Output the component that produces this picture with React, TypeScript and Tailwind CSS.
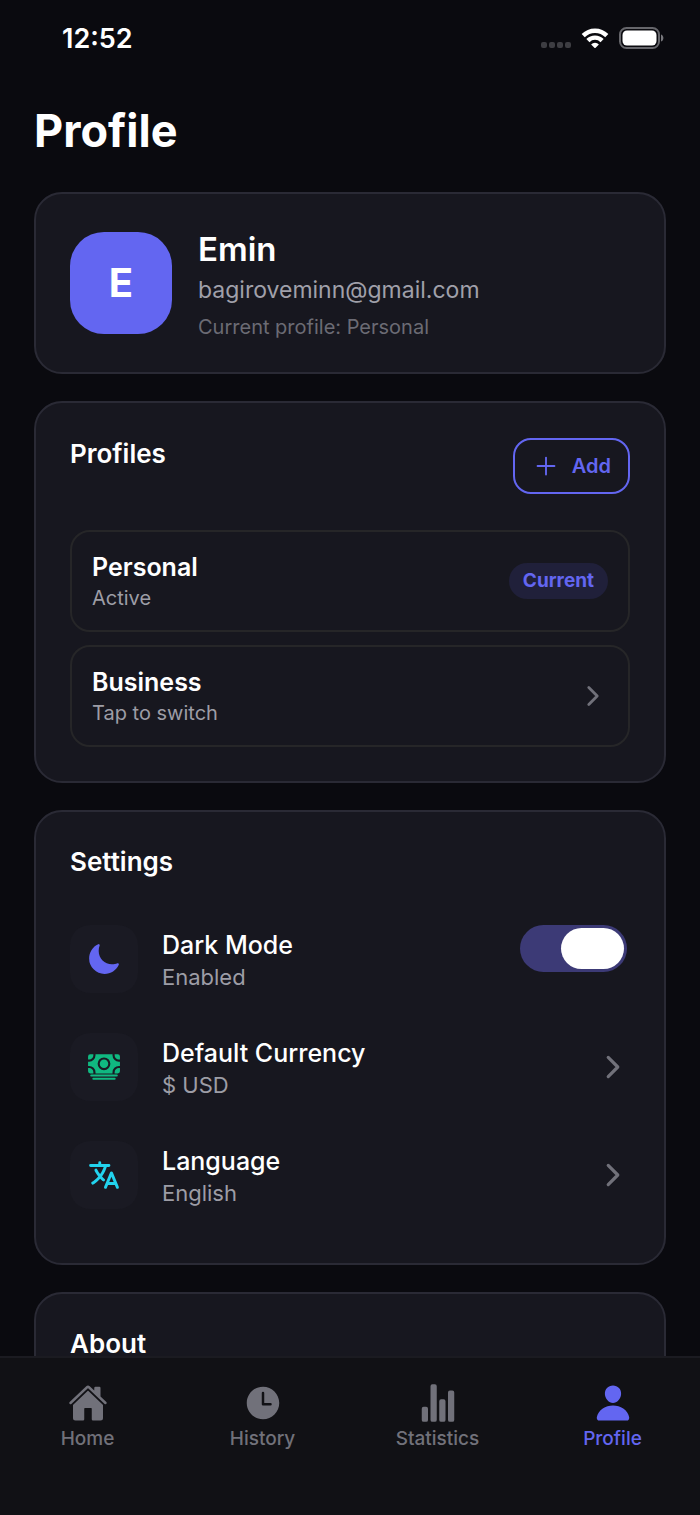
import { useState } from "react";
import type { ReactNode } from "react";
import type { IconType } from "react-icons";
import {
  IoAdd,
  IoCash,
  IoChevronForward,
  IoHome,
  IoLanguage,
  IoMoon,
  IoPerson,
  IoStatsChart,
  IoTime,
} from "react-icons/io5";

function StatusBar() {
  return (
    <div className="flex h-[76px] shrink-0 items-center justify-between pr-9 pl-[62px]">
      <span className="pt-px text-[27px] leading-8 font-semibold">12:52</span>
      <div className="flex items-center gap-[10px]">
        <div className="flex gap-[2px] pt-[14px]">
          {[0, 1, 2, 3].map((dot) => (
            <span key={dot} className="size-[6px] rounded-[2px] bg-[#3d3d42]" />
          ))}
        </div>
        <svg className="h-5 w-7" viewBox="0 0 28 20" fill="none" stroke="#fff" aria-hidden="true">
          <path d="M2.2 7.6A16.6 16.6 0 0 1 25.8 7.6" strokeWidth="4.4" />
          <path d="M6.9 12.6A10 10 0 0 1 21.1 12.6" strokeWidth="4.4" />
          <path d="M14 20.4l-3.9-4a5.6 5.6 0 0 1 7.8 0z" fill="#fff" stroke="none" />
        </svg>
        <svg className="h-[22px] w-[45px]" viewBox="0 0 45 22" aria-hidden="true">
          <rect x="1" y="1" width="39" height="20" rx="6.5" fill="none" stroke="#66666b" strokeWidth="2" />
          <rect x="3.5" y="3.5" width="34" height="15" rx="4.5" fill="#fff" />
          <path d="M42 7.5c3.2 1 3.2 6 0 7z" fill="#77777c" />
        </svg>
      </div>
    </div>
  );
}

function Card({ children, className = "" }: { children: ReactNode; className?: string }) {
  return (
    <section className={`shrink-0 rounded-[28px] border-2 border-[#2a2a35] bg-[#17171f] px-[34px] ${className}`}>
      {children}
    </section>
  );
}

function ProfileItem({ name, note, children }: { name: string; note: string; children: ReactNode }) {
  return (
    <button
      type="button"
      className="flex h-[102px] w-full items-center justify-between rounded-[20px] border-2 border-[#262628] px-5 text-left"
    >
      <span className="flex flex-col pt-[2px]">
        <span className="text-[25px] leading-8 font-semibold">{name}</span>
        <span className="text-[20px] leading-[30px] text-[#9d9da6]">{note}</span>
      </span>
      {children}
    </button>
  );
}

function SettingText({ title, note }: { title: string; note: string }) {
  return (
    <span className="flex flex-1 flex-col pt-1 text-left">
      <span className="text-[25px] leading-8 font-medium">{title}</span>
      <span className="text-[22px] leading-8 text-[#9d9da6]">{note}</span>
    </span>
  );
}

function IconTile({ icon: Icon, tone }: { icon: IconType; tone: string }) {
  return (
    <span className="flex size-[68px] items-center justify-center rounded-[20px] bg-[#1a1a23]">
      <Icon className={`size-[34px] ${tone}`} />
    </span>
  );
}

function Switch({ on, onChange }: { on: boolean; onChange: (on: boolean) => void }) {
  return (
    <label
      className={`mr-[3px] flex h-[47px] w-[107px] rounded-full p-[3px] ${on ? "justify-end bg-[#3c3a76]" : "justify-start bg-[#3a3a44]"}`}
    >
      <input
        type="checkbox"
        className="sr-only"
        aria-label="Dark Mode"
        checked={on}
        onChange={(event) => onChange(event.target.checked)}
      />
      <span className="w-[63px] rounded-full bg-white" />
    </label>
  );
}

const links: { label: string; icon: IconType; active?: boolean }[] = [
  { label: "Home", icon: IoHome },
  { label: "History", icon: IoTime },
  { label: "Statistics", icon: IoStatsChart },
  { label: "Profile", icon: IoPerson, active: true },
];

export default function App() {
  const [dark, setDark] = useState(true);

  return (
    <div className="flex h-screen flex-col bg-[#0a0a0f] font-['Inter',sans-serif] text-white">
      <StatusBar />
      <main className="flex min-h-0 flex-1 flex-col gap-[27px] overflow-hidden px-[34px]">
        <h1 className="mb-[7px] shrink-0 pt-7 text-[45px] leading-[54px] font-bold">Profile</h1>

        <Card className="flex items-start gap-[26px] pt-[38px] pb-8">
          <div className="flex size-[102px] shrink-0 items-center justify-center rounded-[34px] bg-[#6366f1] text-[40px] font-bold">
            E
          </div>
          <div className="flex flex-col">
            <h2 className="text-[33px] leading-[34px] font-semibold">Emin</h2>
            <p className="text-[23px] leading-[48px] text-[#a0a0aa]">bagiroveminn@gmail.com</p>
            <p className="text-[20px] leading-[26px] text-[#6b6b74]">Current profile: Personal</p>
          </div>
        </Card>

        <Card className="pt-[35px] pb-[34px]">
          <div className="mb-9 flex items-start justify-between">
            <h2 className="text-[26px] leading-8 font-semibold">Profiles</h2>
            <button
              type="button"
              className="flex h-14 items-center gap-[11px] rounded-[18px] border-2 border-[#6366f1] pr-[17px] pl-4 text-[20px] font-semibold text-[#6366f1]"
            >
              <IoAdd className="size-[30px]" />
              Add
            </button>
          </div>
          <div className="flex flex-col gap-[13px]">
            <ProfileItem name="Personal" note="Active">
              <span className="flex h-9 items-center rounded-full bg-[#20203a] px-[14px] text-[19px] font-bold text-[#6366f1]">
                Current
              </span>
            </ProfileItem>
            <ProfileItem name="Business" note="Tap to switch">
              <IoChevronForward className="size-[30px] text-[#71717a]" />
            </ProfileItem>
          </div>
        </Card>

        <Card className="pt-[34px] pb-[54px]">
          <h2 className="mb-[47px] text-[26px] leading-8 font-semibold">Settings</h2>
          <div className="flex flex-col gap-10">
            <div className="flex items-start gap-6">
              <IconTile icon={IoMoon} tone="text-[#6366f1]" />
              <SettingText title="Dark Mode" note="Enabled" />
              <Switch on={dark} onChange={setDark} />
            </div>
            <button type="button" className="flex items-start gap-6">
              <IconTile icon={IoCash} tone="text-[#10b981]" />
              <SettingText title="Default Currency" note="$ USD" />
              <IoChevronForward className="size-[34px] self-center text-[#71717a]" />
            </button>
            <button type="button" className="flex items-start gap-6">
              <IconTile icon={IoLanguage} tone="text-[#22d3ee]" />
              <SettingText title="Language" note="English" />
              <IoChevronForward className="size-[34px] self-center text-[#71717a]" />
            </button>
          </div>
        </Card>

        <Card className="h-40 pt-[34px]">
          <h2 className="text-[26px] leading-8 font-semibold">About</h2>
        </Card>
      </main>

      <nav className="grid h-[159px] shrink-0 grid-cols-4 items-start border-t-2 border-[#1b1b21] bg-[#111115] pt-[25px]">
        {links.map(({ label, icon: Icon, active }) => (
          <a
            key={label}
            href={`#${label.toLowerCase()}`}
            className={`flex flex-col items-center gap-1 text-[19px] leading-6 font-medium ${active ? "text-[#6366f1]" : "text-[#71717a]"}`}
          >
            <Icon className="size-10" />
            {label}
          </a>
        ))}
      </nav>
    </div>
  );
}
